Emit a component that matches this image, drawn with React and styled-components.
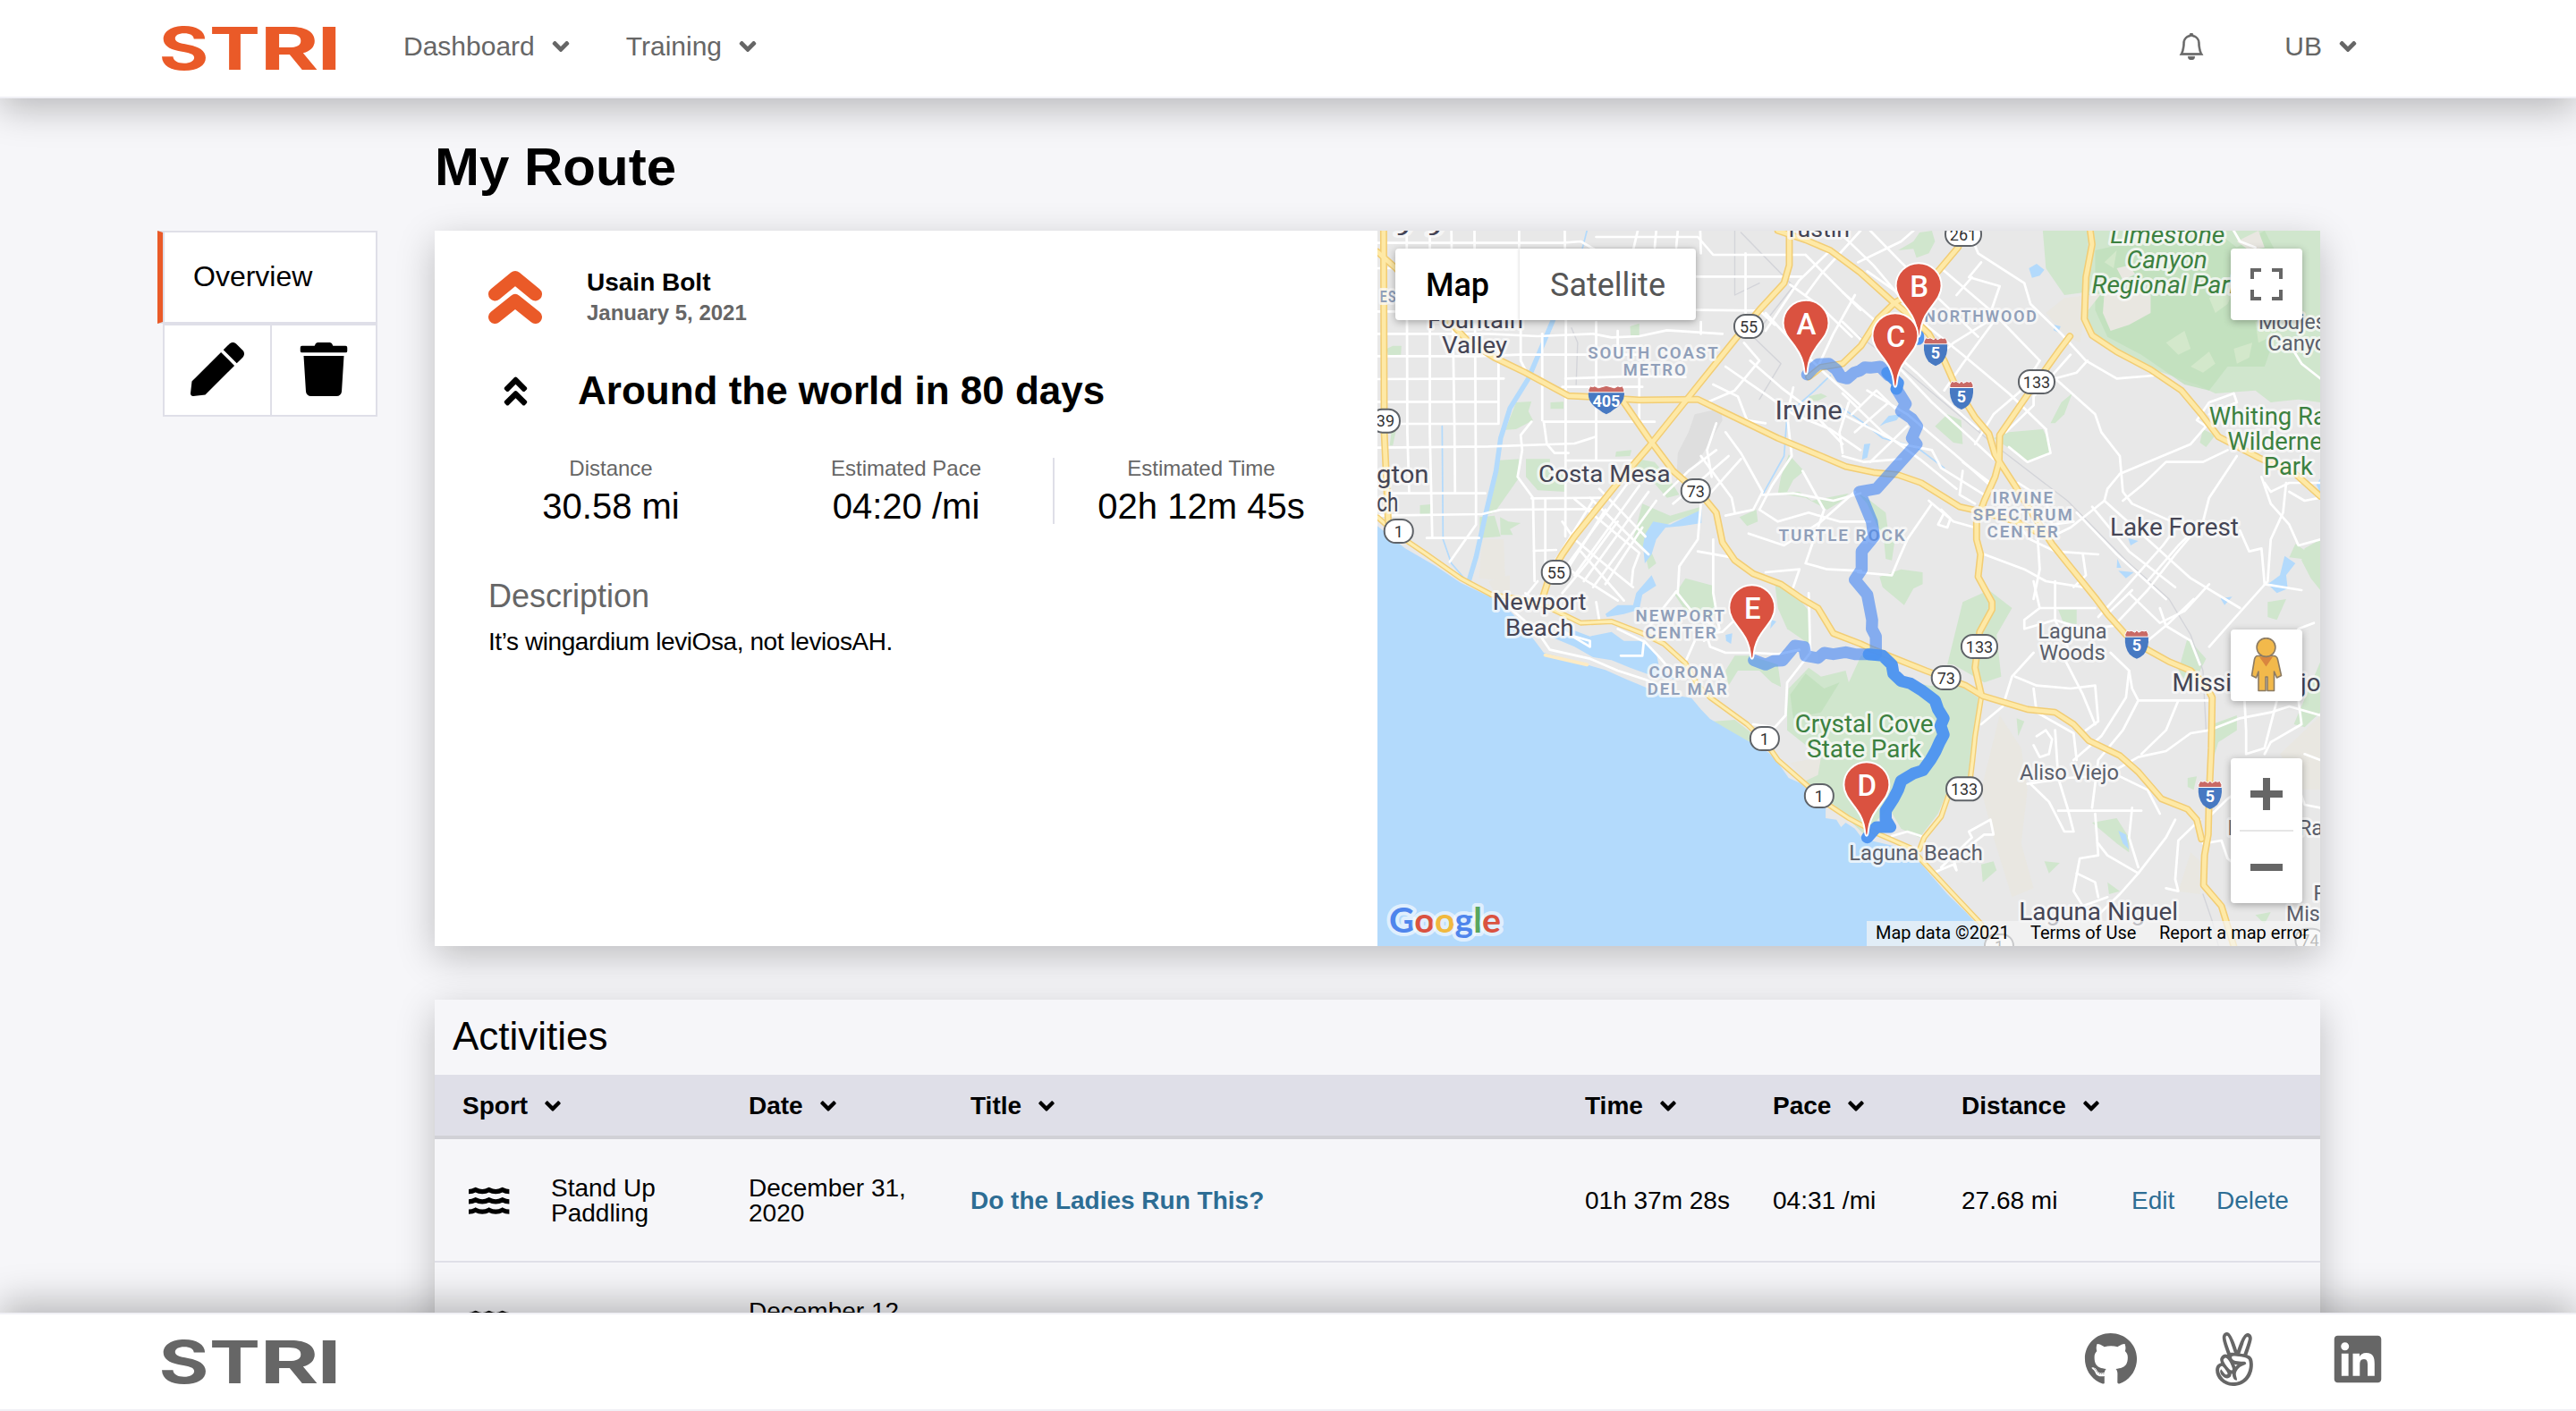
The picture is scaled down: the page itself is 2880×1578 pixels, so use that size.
import React from "react";
import styled, { createGlobalStyle, css } from "styled-components";
import {
  FaAngleDown,
  FaAngleDoubleUp,
  FaAngellist,
  FaGithub,
  FaLinkedin,
  FaPen,
  FaTrash,
} from "react-icons/fa";
import { BsBell } from "react-icons/bs";

const color = {
  orange: "#ea5a28",
  gray: "#666666",
  page: "#f6f6f9",
  line: "#dfdfe8",
  soft: "#f0f0f5",
  link: "#2d6d94",
};

const GlobalStyle = createGlobalStyle`
  *, *::before, *::after { box-sizing: border-box; }
  html, body { height: 100%; overflow: hidden; }
  body {
    margin: 0;
    background: ${color.page};
    color: #000;
    font-family: "Liberation Sans", Arial, Helvetica, sans-serif;
    font-size: 28px;
    line-height: 1;
  }
  ul, h1, h2, h3, p { margin: 0; padding: 0; list-style: none; font-weight: 400; }
  svg { display: block; flex: none; }
`;

/* ---------- page frame ---------- */

const Page = styled.div`
  height: 1578px;
  display: flex;
  flex-direction: column;
`;

const bar = css`
  flex: none;
  display: flex;
  align-items: center;
  height: 110px;
  background: #fff;
  z-index: 2;
`;

const Header = styled.header`
  ${bar}
  padding: 0 240px 5px 178px;
  border-bottom: 2px solid ${color.soft};
  box-shadow: 0 12px 40px rgba(0, 0, 0, 0.25);
`;

const Footer = styled.footer`
  ${bar}
  justify-content: space-between;
  padding: 0 214px 4px 178px;
  border: solid ${color.soft};
  border-width: 2px 0;
  box-shadow: 0 -12px 40px rgba(0, 0, 0, 0.25);
`;

const Nav = styled.nav`
  flex: 1;
  display: flex;
  align-items: center;
  gap: 58px;
  margin-left: 73px;
`;

const NavItem = styled.a`
  display: flex;
  align-items: center;
  gap: 14px;
  color: ${color.gray};
  font-size: 30px;
`;

const Account = styled.div`
  display: flex;
  align-items: center;
  gap: 89px;
  color: ${color.gray};
`;

const Bell = styled(BsBell)`
  stroke: currentColor;
  stroke-width: 0.35px;
`;

const Social = styled.div`
  display: flex;
  gap: 78px;
  padding-bottom: 2px;
  color: ${color.gray};
`;

const Main = styled.main`
  flex: 1;
  min-height: 0;
  display: grid;
  grid-template-columns: 246px 2108px;
  column-gap: 64px;
  padding: 0 0 0 176px;
  align-content: start;
`;

const PageTitle = styled.h1`
  grid-column: 2;
  height: 148px;
  padding: 47px 0 0 0;
  font-size: 60px;
  font-weight: 700;
`;

/* ---------- side menu ---------- */

const SideMenu = styled.ul`
  display: flex;
  flex-direction: column;
`;

const SideTab = styled.li`
  height: 104px;
  padding: 0 0 2px 34px;
  display: flex;
  align-items: center;
  background: #fff;
  border: solid ${color.line};
  border-width: 2px 2px 2px 0;
  border-left: 6px solid ${color.orange};
  box-shadow: inset 2px 0 0 ${color.line};
  font-size: 32px;
`;

const SideActions = styled.li`
  margin-left: 6px;
  height: 104px;
  display: grid;
  grid-template-columns: 120px 1fr;
  border: 2px solid ${color.line};
  background: #fff;
`;

const SideAction = styled.button`
  display: flex;
  align-items: center;
  justify-content: center;
  padding: 0 0 2px;
  border: 0;
  border-right: ${(p) => (p.$divided ? `2px solid ${color.line}` : "0")};
  background: none;
  color: #000;
`;

/* ---------- cards ---------- */

const Content = styled.div`
  display: flex;
  flex-direction: column;
  gap: 60px;
`;

const cardShadow = css`
  box-shadow: 0 12px 40px rgba(0, 0, 0, 0.23);
`;

const RouteCard = styled.section`
  ${cardShadow}
  display: grid;
  grid-template-columns: 1fr 1fr;
  height: 800px;
  background: #fff;
`;

const Details = styled.div`
  display: flex;
  flex-direction: column;
  padding: 44px 30px 0 33px;
`;

const Author = styled.div`
  display: flex;
  align-items: flex-start;
  gap: 50px;
  padding-left: 27px;
`;

const AuthorName = styled.div`
  font-weight: 700;
  font-size: 28px;
`;

const AuthorDate = styled.div`
  margin-top: 8px;
  font-weight: 700;
  font-size: 24px;
  color: ${color.gray};
`;

const RouteTitle = styled.h2`
  display: flex;
  align-items: center;
  gap: 49px;
  margin-top: 51px;
  padding-left: 37px;
  font-size: 44px;
  font-weight: 700;
  height: 48px;
`;

const Stats = styled.ul`
  display: grid;
  grid-template-columns: repeat(3, 330px);
  margin-top: 51px;
`;

const Stat = styled.li`
  display: flex;
  flex-direction: column;
  align-items: center;
  gap: 10px;
  border-right: 2px solid ${(p) => (p.$divided ? color.line : "transparent")};
  font-size: 40px;
`;

const StatLabel = styled.span`
  font-size: 24px;
  color: ${color.gray};
`;

const Description = styled.div`
  display: flex;
  flex-direction: column;
  gap: 19px;
  margin-top: 63px;
  padding-left: 27px;

  h3 {
    font-size: 36px;
    color: ${color.gray};
  }

  p {
    font-size: 28px;
    letter-spacing: -0.42px;
  }
`;

/* ---------- activities ---------- */

const Activities = styled.section`
  ${cardShadow}
  height: 520px;
  background: ${color.page};
`;

const ActivitiesTitle = styled.h2`
  height: 84px;
  padding: 19px 20px 0;
  font-size: 44px;
`;

const row = css`
  display: grid;
  grid-template-columns: 320px 248px 687px 210px 211px 190px 95px 1fr;
  align-items: center;
  padding: 2px 0 0 31px;
`;

const TableHead = styled.div`
  ${row}
  height: 72px;
  background: ${color.line};
  border-bottom: 4px solid #d1d1d6;
  font-weight: 700;
`;

const HeadCell = styled.div`
  display: flex;
  align-items: center;
  gap: 14px;
`;

const TableRow = styled.div`
  ${row}
  height: 138px;
  border-bottom: 2px solid ${color.line};
`;

const Cell = styled.div`
  max-width: ${(p) => p.$max || "none"};
`;

const SportCell = styled.div`
  display: grid;
  grid-template-columns: 92px 130px;
  align-items: center;
  padding-left: 7px;
`;

const Link = styled.a`
  color: ${color.link};
  font-weight: ${(p) => (p.$bold ? 700 : 400)};
`;

/* ---------- drawings ---------- */

const LETTERS = [
  { ch: "S", x: -0.5, w: 56 },
  { ch: "T", x: 56, w: 57 },
  { ch: "R", x: 112.5, w: 66 },
  { ch: "I", x: 176.5, w: 27 },
];

const Logo = ({ fill }) => (
  <svg width="200" height="50" viewBox="0 0 200 50" overflow="visible">
    {LETTERS.map((l) => (
      <text
        key={l.ch}
        x={l.x}
        y="50.5"
        fill={fill}
        fontFamily="Inter, sans-serif"
        fontWeight="700"
        fontSize="65.5"
        textLength={l.w}
        lengthAdjust="spacingAndGlyphs"
      >
        {l.ch}
      </text>
    ))}
  </svg>
);

const Avatar = () => (
  <svg width="60" height="60" viewBox="0 0 60 60" fill="none" stroke={color.orange} strokeWidth="15" strokeLinecap="round" strokeLinejoin="round">
    <path d="M7.5 27 30 8.5 52.500 27M7.500 52.500 30 34.500 52.500 52.500" />
  </svg>
);

const Waves = () => (
  <svg width="46" height="32" viewBox="0 0 46 32" fill="none" stroke="#000" strokeWidth="5.2" strokeLinejoin="miter">
    {[0, 11.3, 22.6].map((y) => (
      <path key={y} d={`M0 ${y + 5.6}Q4 ${y + 5.6} 7.7 ${y + 3.6}Q15.2 ${y + 7.6} 22.7 ${y + 3.6}Q30.2 ${y + 7.6} 37.7 ${y + 3.6}Q41.5 ${y + 5.6} 45.4 ${y + 5.6}`} />
    ))}
  </svg>
);

/* ---------- map ---------- */

const MapFrame = styled.div`
  position: relative;
  overflow: hidden;
  background: #e8e8e8;
`;

const panel = css`
  position: absolute;
  background: #fff;
  border-radius: 4px;
  box-shadow: 0 2px 8px rgba(0, 0, 0, 0.3);
`;

const MapTypes = styled.div`
  ${panel}
  left: 20px;
  top: 20px;
  display: grid;
  grid-template-columns: 139px 197px;
  height: 80px;
  font: 36px/82px Roboto, sans-serif;
  text-align: center;
`;

const MapType = styled.div`
  height: 80px;
  color: ${(p) => (p.$active ? "#000" : "#565656")};
  font-weight: ${(p) => (p.$active ? 500 : 400)};
  box-shadow: ${(p) => (p.$active ? "none" : "-1px 0 3px rgba(0, 0, 0, 0.12)")};
`;

const MapButton = styled.div`
  ${panel}
  right: 20px;
  top: ${(p) => p.$top}px;
  width: 80px;
  height: ${(p) => p.$height || 80}px;
  display: flex;
  align-items: center;
  justify-content: center;
`;

const Legal = styled.div`
  position: absolute;
  right: 0;
  bottom: 0;
  display: flex;
  height: 28px;
  background: rgba(245, 245, 245, 0.7);
  font: 20px/26px Roboto, sans-serif;
  color: #000;
  white-space: nowrap;
`;

const LegalItem = styled.span`
  padding: 0 0 0 10px;
  width: ${(p) => p.$width}px;
`;

/* Roads, parks and water share one survey grid, scaled to the frame. */
const GX = 540 / 1568;
const GY = 1 / 3;
const px = (u) => u * GX;
const py = (v) => (v - 24) * GY;

const WATER = [
  "0,1015 90,1090 190,1150 270,1205 340,1240 400,1270 440,1310 500,1385 540,1440 620,1462 740,1498 810,1530 880,1560 960,1582 1020,1592 1050,1630 1080,1662 1150,1705 1210,1740 1270,1775 1300,1808 1335,1860 1400,1890 1455,1955 1455,1995 1490,2000 1505,2025 1520,2010 1550,2030 1568,2055 1610,2072 1725,2100 1755,2135 1800,2190 1850,2250 1910,2310 1950,2355 1985,2424 0,2424",
  "570,1390 600,1350 690,1385 760,1370 800,1400 860,1400 905,1440 915,1490 970,1530 900,1520 820,1490 760,1465 700,1455 640,1420",
  "740,1310 780,1280 830,1280 840,1240 890,1180 905,1215 860,1245 850,1295 800,1310 745,1320",
  "895,1000 950,1010 1000,985 1052,960 1052,1005 990,1015 935,1020 905,1060 890,1110 868,1140 862,1080 870,1040",
  "2115,150 2140,135 2165,155 2150,175 2125,182",
  "2197,340 2218,345 2210,365 2195,358",
  "1630,680 1660,645 1700,640 1685,660 1650,670",
  "1580,740 1600,738 1590,785 1573,792",
  "2890,1210 2930,1180 2945,1115 2980,1140 2950,1180 2955,1225 2920,1240",
  "2437,1055 2470,1065 2445,1080",
  "2405,1165 2455,1170 2430,1190",
  "2402,1125 2415,1155 2400,1155",
  "2737,1258 2775,1252 2750,1280",
  "3048,875 3061,855 3061,905",
  "2405,2037 2430,2050 2440,2100 2420,2080",
  "1130,1380 1152,1375 1148,1410 1132,1400",
  "1280,1330 1295,1335 1275,1360",
];

const PARK = [
  "30,420 50,410 78,410 76,440 35,442",
  "820,345 850,335 850,375 822,375",
  "450,600 500,597 490,630 505,660 450,690 415,692",
  "562,600 604,598 604,622 562,622",
  "385,795 460,790 458,855 380,970 350,980",
  "482,790 560,790 560,850 612,840 612,900 520,895 482,850",
  "332,985 380,980 400,1050 332,1055",
  "398,985 425,1000 465,1005 430,1025 440,1045 400,1045",
  "775,765 825,760 820,780 772,782",
  "860,940 950,980 1050,950 1050,965 960,1000 900,1030 880,1080 905,1140 880,1160 865,1090 830,1060",
  "845,790 900,800 950,860 980,910 940,920 890,860 830,815",
  "1335,775 1385,830 1350,860 1330,900 1370,900 1410,930 1530,905 1500,935 1460,960 1390,920 1300,905 1310,850",
  "1175,985 1230,960 1235,1000 1200,1015",
  "1400,580 1440,570 1460,580 1430,595 1410,595",
  "138,945 172,942 170,975 138,975",
  "45,700 65,670 50,745 40,745",
  "1560,905 1600,930 1650,970 1660,1050 1680,1060 1670,1130 1650,1125 1645,1070 1625,1020 1590,940",
  "1690,90 1740,60 1760,30 1800,24 1810,60 1790,100 1750,115 1740,85",
  "2160,24 2310,24 2300,230 2230,240 2170,150",
  "2310,24 2700,24 2860,24 3061,24 3061,600 2990,590 2900,600 2850,560 2720,570 2660,540 2520,490 2400,430 2320,370 2295,310 2305,160",
  "2000,720 2050,700 2160,690 2185,740 2185,770 2110,800 2060,760",
  "1850,640 1895,660 1900,740 1870,735 1810,680",
  "2185,670 2220,600 2255,570 2230,640 2200,670",
  "2680,690 2720,710 2690,750 2670,735",
  "3010,1090 3061,1060 3061,1230 3030,1190 3000,1130",
  "2980,1075 3030,1110 3040,1130 2960,1120",
  "2630,1390 2690,1460 2640,1560 2600,1500",
  "1630,1185 1700,1160 1770,1170 1770,1210 1740,1225 1710,1280 1640,1220",
  "965,1245 1000,1190 1090,1215 1100,1310 1060,1330 1000,1300",
  "1290,1205 1340,1220 1400,1300 1400,1410 1330,1360 1300,1290",
  "1130,1500 1160,1450 1210,1450 1300,1480 1310,1555 1280,1540 1240,1500 1170,1500 1140,1550",
  "1090,1670 1160,1665 1215,1710 1220,1745 1170,1720",
  "1335,1560 1400,1490 1440,1520 1520,1500 1530,1540 1570,1450 1640,1450 1700,1530 1790,1550 1890,1550 1950,1590 1940,1750 1920,1860 1860,1880 1820,1980 1760,2060 1700,2030 1660,1960 1580,2050 1480,1950 1390,1870 1440,1790 1330,1700 1330,1640",
  "1900,1270 1985,1230 2060,1290 2010,1380 2025,1520 1970,1540 1870,1480 1850,1480",
  "2210,1295 2270,1295 2270,1345 2225,1335",
  "2630,1860 2660,1855 2650,1900 2630,1890",
  "2710,1680 2790,1650 2790,1700 2730,1740 2715,1790",
  "2890,1270 2950,1260 2920,1330 2890,1320",
  "2975,1680 3061,1470 3061,1640 3010,1690",
  "2320,2010 2400,1995 2440,2060 2440,2110 2400,2080",
  "2370,2210 2410,2240 2375,2250",
  "1960,2150 2000,2140 2010,2170 1965,2210",
  "2075,1660 2100,1670 2080,1720",
  "2165,2140 2215,2145 2180,2180",
  "2850,2320 2900,2310 2880,2350",
];

const FOREST = [
  "2330,90 2460,60 2720,24 2790,80 2880,24 2990,240 2930,330 2880,480 2760,480 2700,560 2620,540 2480,440 2370,380 2330,290",
  "1340,1580 1390,1510 1450,1560 1500,1540 1440,1640 1350,1660",
];

const GLADE = [
  "2560,400 2620,360 2640,420 2600,440", "2700,250 2790,200 2760,270 2720,300", "2850,330 2930,290 2900,380 2860,400", "2640,480 2700,430 2720,470 2680,500",
  "2940,120 3000,90 2990,150 2950,170", "2780,420 2840,400 2830,450 2790,470", "2360,130 2400,90 2390,150", "2800,310 2840,260 2850,310",
];

const HILL = [
  "2230,250 2350,235 2300,300 2280,400 2240,380 2170,300",
  "2360,230 2430,220 2510,240 2510,300 2440,340 2380,360 2355,300",
  "2400,150 2440,140 2460,170 2420,190",
  "2790,60 2860,24 2880,80 2830,90",
  "340,1060 410,1060 415,1200 330,1190",
  "1340,1810 1440,1790 1430,1850 1390,1870",
  "2020,1650 2090,1760 2110,1900 2090,2080 2130,2230 2060,2260 2000,2060 1960,1900",
  "2930,1780 3061,1650 3061,1900 3000,1900",
  "2640,2110 2690,2160 2670,2250 2600,2240",
  "360,1200 430,1180 430,1250 380,1240",
];

const AIRPORT = ["1030,640 1115,620 1120,660 1040,800 970,870 975,770 1010,700"];

const STREETS = [
  "0,65 600,65 660,60 710,90", "0,150 60,150", "0,295 90,295", "0,370 360,370 520,378 700,370 760,382 850,378 940,358 1120,370",
  "0,445 320,445 460,440 850,440", "0,522 410,520", "0,598 390,598", "0,672 390,672", "0,752 360,748 640,738 710,715",
  "40,905 350,905", "0,980 340,975 400,960 720,958", "160,1055 330,1055", "610,520 850,512 1000,515", "540,665 900,665",
  "610,795 830,795", "500,922 740,920", "508,1098 580,1095", "710,45 1040,45 1090,105 1390,105", "720,178 1380,178",
  "1030,290 1240,292 1290,340", "600,548 860,548",
  "95,24 97,700 103,905", "170,24 170,700 178,1055", "240,24 250,680 252,905", "315,24 320,905 320,1010 235,1135",
  "393,420 393,672", "460,24 460,90", "465,340 465,460 480,490", "535,370 535,660", "608,24 612,300 610,1050", "710,330 710,790",
  "845,24 830,90", "905,24 900,80", "975,24 970,80", "1048,24 1050,100", "1050,330 1050,370", "1195,100 1195,300",
  "780,360 780,440", "850,500 850,660", "1530,600 1500,700 1510,770",
  "500,665 465,710 470,760 455,850 505,920 510,1200", "540,665 550,740 575,770 620,770", "545,925 545,1190",
  "600,1000 640,1060 710,1120 830,1220", "640,925 850,1105 830,1160 825,1210", "690,920 880,1110", "720,890 870,1050",
  "620,1160 780,1265", "660,1100 800,1265", "820,860 620,1140", "850,880 640,1180", "880,900 670,1200", "905,930 700,1220", "860,1020 740,1210",
  "780,1000 680,1140 600,1240", "700,930 560,1160", "740,960 610,1170",
  "1100,760 1010,830 930,910", "1140,780 1040,870 960,940", "1180,790 1050,940 1040,1060 980,1150 975,1240",
  "1130,700 1180,770 1250,900 1220,960 1130,980", "1050,780 1150,920 1160,970", "1100,670 1070,760 1085,850",
  "1260,300 1350,400 1450,500 1568,610", "1210,460 1310,550 1400,620 1510,740", "1130,480 1270,580 1350,640 1470,690 1568,760",
  "1390,105 1568,290", "1340,205 1440,280 1540,380", "1470,90 1370,190 1260,360", "1568,24 1440,170 1390,240", "1550,240 1480,370 1430,480",
  "1190,400 1240,460 1160,560 1070,600", "1090,540 1170,580 1200,660 1260,670", "1350,550 1330,640 1345,780 1280,880 1240,960",
  "1250,910 1350,905 1480,930 1568,905", "1240,960 1300,1000 1400,970 1500,1000 1600,1000", "1205,1040 1320,1080 1440,1000 1550,900",
  "1380,830 1450,960 1390,1140 1460,1160 1570,1165", "1040,1100 1150,1120", "1260,1170 1370,1160 1350,1220", "1090,1060 1090,1240 1110,1360 1060,1400",
  "1400,1240 1405,1440 1330,1540 1325,1650 1290,1690 1220,1680", "1060,1350 1080,1420 1130,1440 1220,1440 1300,1445 1370,1430",
  "970,1235 920,1300 870,1370", "970,1235 1020,1300 1090,1350", "1030,1400 1000,1470", "1180,1310 1120,1370 1030,1380",
  "430,1290 520,1370 560,1430 690,1460 780,1500 870,1530 960,1570", "560,1340 690,1420 690,1400 590,1370", "790,1450 860,1450 865,1400 920,1460 960,1510",
  "480,1240 550,1290", "520,1200 450,1290", "710,1270 720,1330", "780,1360 860,1400",
  "1600,24 1700,130 1830,260 1950,380", "1510,40 1610,140 1700,250", "1560,130 1640,90 1700,60 1740,24", "1590,160 1700,240 1780,340 1900,440 2050,570 2170,690",
  "1830,150 2000,300 2150,460", "1920,24 1950,100 2100,200 2120,270 2220,370 2300,460 2400,520 2520,510",
  "1960,130 1920,180 2020,210 1980,330 1870,400 1800,470", "1930,180 1880,240", "2000,330 1900,470 1840,560",
  "1640,400 1750,500 1830,580 1950,690", "1690,480 1800,600 2000,790", "1590,560 1720,640 1870,770 1990,880", "1510,570 1640,700 1760,790 1880,890",
  "1510,230 1620,330 1640,360", "1510,330 1570,390", "1540,640 1620,560 1680,620", "1550,700 1660,600", "1600,800 1720,680",
  "1510,640 1700,740 1800,760 1830,820 1970,910", "1510,780 1580,800 1700,790",
  "2150,460 2090,560 2000,640 1940,740", "2200,520 2330,640 2350,700 2410,780 2420,900 2450,940 2600,1010", "2305,460 2270,500 2200,520",
  "2250,440 2130,580 2130,610 2040,700", "2170,690 2185,770 2110,800 2050,750",
  "2410,840 2640,740 2690,680 2660,660 2700,600 2780,570 2790,600 2700,640", "2790,780 2700,920 2680,1000 2600,1080 2500,1200", "2420,930 2480,880 2560,800 2680,800 2760,760",
  "2410,840 2370,890 2360,930 2250,1020 2190,1050", "2360,930 2500,1060 2640,1190 2800,1290", "2270,970 2400,1110 2560,1260", "2320,950 2440,1100 2590,1220",
  "2880,870 2900,900 2960,870 3061,870", "2870,850 2900,940 2960,1010 2990,1080 3061,1060", "2950,870 2940,970 2900,1060 2890,1200 2760,1350 2700,1420",
  "2600,1010 2550,1080 2430,1220 2340,1320", "2680,1000 2590,1110 2500,1230 2400,1340", "2800,1030 2830,1100 2870,1090 2880,1210 3000,1230", "2960,900 3010,930 3061,920",
  "1800,940 1720,1060 1690,1130 1670,1180 1560,1170", "1840,970 1820,1010 1850,1020 1860,990 1830,960", "1790,930 1870,1000 1940,1020", "2080,870 2170,930 2190,1010 2260,1000",
  "1900,830 1890,910 1940,940", "2000,900 1990,870 1900,800", "1970,1110 2100,1160 2170,1200 2290,1220", "2070,1000 2120,1060 2200,1100 2340,1110", "2140,1000 2150,1160 2130,1260", "2290,1110 2300,1180 2260,1220",
  "2130,1200 2150,1290 2100,1330 2100,1360 2200,1330 2290,1360 2390,1350", "2150,1290 2330,1290", "2200,1200 2200,1330 2240,1420",
  "2130,1440 2060,1520 2030,1620 1960,1680", "2070,1520 2140,1550 2250,1560 2330,1550 2340,1670 2300,1700", "2230,1460 2290,1580 2330,1680", "2380,1440 2440,1500 2450,1560 2470,1600 2700,1600",
  "2440,1500 2430,1590 2350,1720 2260,1800", "2130,1560 2140,1640 2260,1710 2270,1800", "2140,1720 2170,1700 2190,1730 2180,1780 2150,1790 2130,1750",
  "2470,1600 2420,1700 2340,1800 2320,1960", "2200,1700 2210,1860 2240,1960 2260,2040 2230,2040 2180,1940 2120,1880", "2110,1880 2240,1860 2400,1850 2500,1900 2540,1980", "2210,1970 2480,1970",
  "2700,1700 2640,1710 2560,1770 2470,1790 2350,1860", "2600,1600 2560,1700 2480,1780", "2810,1440 2810,1500 2820,1700 2820,1780 2880,1760 2920,1600", "2700,1700 2800,1660 2900,1640 2960,1620 3061,1650",
  "2670,2000 2600,2070 2590,2200 2600,2240 2560,2230", "2330,1980 2340,2120 2280,2130 2260,2240 2290,2290 2370,2260", "2340,2080 2370,2120 2470,2180 2560,2060 2590,2000", "2470,2180 2410,2250 2330,2330",
  "2450,1960 2440,2060 2470,2160", "2270,2180 2330,2210 2340,2260", "1670,2055 1720,2040 1780,2060", "1800,2180 1870,2150 1880,2170 1870,2130 1970,2050 2000,2050 1990,2000 1920,2040 1930,2060 1830,2160",
  "2680,2080 2740,2070 2760,2130 2840,2200", "2700,1990 2760,1930 2800,1900", "3010,1780 3061,1800", "2990,1890 3010,1950 3061,1960", "2990,1600 3000,1680 2900,1740 2880,1780",
  "2540,1290 2560,1350 2640,1400 2670,1480", "2440,1240 2540,1340 2620,1300 2700,1210", "2370,1310 2450,1230", "2500,1400 2570,1340 2650,1260",
  "2780,24 2800,60 2850,80", "2970,420 3000,470 3061,520", "3040,1340 2990,1360 2960,1420",
];

const RAILS = ["1160,24 1160,240 1240,200", "1540,360 1700,480 2000,740 2240,930 2430,1130 2570,1260 2640,1380 2680,1500 2690,1700", "2680,2250 2710,2340 2730,2424", "630,350 650,400 645,540", "1180,30 1350,210 1220,380 1310,470 1240,590"];
const STREAMS = ["680,24 665,85", "1470,510 1420,560 1330,640 1320,780 1250,910", "1510,620 1580,670 1640,720 1750,750 1840,820", "210,680 213,1060 240,1140 290,1200"];

const HIGHWAYS = [
  "20,24 22,700 28,830 35,1000",
  "0,95 60,150 225,320 290,390 380,450 480,500 620,578 700,582 850,592 1040,590 1120,630 1300,720 1440,780 1520,815 1610,835 1690,843 1765,870 1890,950 1945,963 2075,1000 2170,1050",
  "1300,24 1390,55 1470,90 1568,165 1670,260 1730,310 1790,370 1840,460 1870,530 1910,600 1940,650 1985,705 2005,775 2020,800 2070,880 2130,980 2190,1075 2240,1140 2330,1255 2370,1310 2430,1380 2500,1430 2570,1470 2640,1500 2690,1550 2710,1590 2707,1760 2700,1920 2697,2050 2685,2120 2682,2220 2740,2290 2780,2424",
  "1885,80 1820,160 1760,220 1680,265 1625,320 1570,410 1510,470 1440,482 1400,515",
  "2248,378 2210,430 2120,560 2020,710 2018,800 2005,850 1970,930 1945,1000 1945,1060 1958,1110 1950,1185 1995,1270 1995,1295 1955,1370 1940,1490 1960,1580",
  "2314,24 2320,70 2300,180 2295,320 2320,375 2400,430 2510,490 2610,560 2675,640 2730,715 2860,785 2980,840 3061,915",
  "1337,24 1337,140 1320,200 1240,290 1160,390 1020,570 880,750 780,870 640,1050 600,1110 560,1180 535,1260",
  "800,600 880,720 960,830 1060,920 1100,970 1120,1070 1160,1130 1220,1175 1310,1210 1380,1260 1430,1290 1480,1375 1568,1410 1610,1430 1780,1500 1910,1550 1965,1585 2110,1630 2200,1640 2260,1680 2310,1735 2410,1785 2470,1840 2545,1930 2630,1965 2660,2000 2675,2065",
];
const HIGHWAYS_THIN = [
  "0,985 60,1040 160,1110 270,1190 370,1245",
  "370,1245 470,1260 560,1290 660,1340 760,1335 860,1375 930,1410 1000,1475 1040,1550 1080,1590 1200,1680 1260,1740 1300,1800 1400,1890 1450,1940 1530,1995 1620,2045 1730,2095 1770,2140 1860,2240 1960,2350 1990,2424",
  "1960,1590 1940,1720 1932,1800 1925,1860 1860,1900 1830,1990 1775,2060 1760,2100",
];

const ROUTE = [
  "1395,507 1412,488 1430,472 1465,470 1490,490 1505,515 1525,520 1548,500 1566,494 1582,482 1600,484 1632,480 1660,510",
  "1685,555 1715,605 1700,630 1735,655 1752,680 1735,720 1750,740 1620,890 1565,900 1605,1000 1612,1050 1572,1100 1572,1160 1550,1195 1590,1245 1606,1330 1605,1360 1618,1385 1618,1440",
  "1222,1465 1260,1480 1285,1468 1315,1466 1340,1435 1355,1416 1385,1420 1390,1450 1430,1458 1450,1440 1480,1445 1520,1438 1550,1445 1618,1445",
];
const ROUTE_DOUBLE = [
  "1655,500 1690,535 1685,555", "1755,376 1755,388",
  "1595,1445 1640,1450 1670,1480 1675,1510 1700,1535 1730,1543 1765,1565 1810,1600 1820,1630 1838,1660 1828,1685 1838,1715 1825,1740 1812,1770 1795,1800 1770,1835 1740,1845 1700,1870 1690,1900 1675,1930 1650,1970 1650,2000 1665,2025 1620,2025 1590,2060",
];

const CITY = "#454555";
const TOWN = "#5b5f6b";
const PARKTEXT = "#3c8140";
const AREA = "#909fb9";

/* [text, centre u, baseline v, width u, size px, colour, style] */
const LABELS = [
  ["y  y", 145, 24, 170, 26, CITY],
  ["Tustin", 1427, 46, 212, 26, CITY],
  ["Fountain", 318, 352, 310, 26, CITY],
  ["Valley", 315, 436, 212, 26, CITY],
  ["Costa Mesa", 737, 868, 428, 26, CITY],
  ["Irvine", 1400, 656, 218, 30, CITY],
  ["gton", 82, 870, 170, 28, CITY],
  ["ch", 33, 965, 70, 29, CITY],
  ["Newport", 526, 1297, 304, 26, CITY],
  ["Beach", 526, 1382, 222, 26, CITY],
  ["Lake Forest", 2587, 1046, 418, 27, CITY],
  ["Mission Viejo", 2821, 1570, 482, 28, CITY],
  ["Laguna Niguel", 2341, 2338, 516, 28, CITY],
  ["Laguna", 2256, 1393, 224, 24, TOWN],
  ["Woods", 2256, 1464, 214, 24, TOWN],
  ["Aliso Viejo", 2246, 1866, 322, 24, TOWN],
  ["Laguna Beach", 1748, 2136, 434, 24, TOWN],
  ["Modjeska", 3005, 354, 290, 24, TOWN],
  ["Canyon", 3005, 426, 230, 24, TOWN],
  ["Ladera Ranch", 2972, 2052, 424, 24, TOWN],
  ["R", 3060, 2270, 44, 24, TOWN],
  ["Mission", 3068, 2340, 236, 24, TOWN],
  ["ES", 36, 264, 56, 19, AREA, "area"],
  ["SOUTH COAST", 897, 453, 428, 19, AREA, "area"],
  ["METRO", 902, 510, 208, 19, AREA, "area"],
  ["NORTHWOOD", 1960, 329, 370, 19, AREA, "area"],
  ["IRVINE", 2097, 938, 202, 19, AREA, "area"],
  ["SPECTRUM", 2097, 996, 328, 19, AREA, "area"],
  ["CENTER", 2097, 1052, 236, 19, AREA, "area"],
  ["TURTLE ROCK", 1510, 1064, 416, 19, AREA, "area"],
  ["NEWPORT", 985, 1334, 294, 19, AREA, "area"],
  ["CENTER", 987, 1392, 236, 19, AREA, "area"],
  ["CORONA", 1007, 1524, 252, 19, AREA, "area"],
  ["DEL MAR", 1008, 1580, 264, 19, AREA, "area"],
  ["Limestone", 2565, 66, 372, 27, PARKTEXT, "italic"],
  ["Canyon", 2563, 150, 262, 27, PARKTEXT, "italic"],
  ["Regional Park", 2563, 234, 488, 27, PARKTEXT, "italic"],
  ["Whiting Ranch", 2955, 674, 510, 27, PARKTEXT],
  ["Wilderness", 2955, 758, 390, 27, PARKTEXT],
  ["Park", 2957, 842, 160, 27, PARKTEXT],
  ["Crystal Cove", 1580, 1706, 450, 27, PARKTEXT],
  ["State Park", 1580, 1790, 372, 27, PARKTEXT],
];

const MapLabel = ({ text, u, v, w, size, fill, kind }) => (
  <text
    x={px(u - w / 2)}
    y={py(v)}
    fill={fill}
    fontSize={size}
    fontWeight={kind === "area" ? 600 : 400}
    fontStyle={kind === "italic" ? "italic" : "normal"}
    letterSpacing={kind === "area" ? 2 : 0}
    textLength={px(w)}
    lengthAdjust="spacingAndGlyphs"
    stroke="rgba(250,250,250,0.75)"
    strokeWidth="6"
    strokeLinejoin="round"
    paintOrder="stroke"
  >
    {text}
  </text>
);

const STATE_SHIELDS = [
  ["55", 1205, 345], ["39", 26, 662], ["73", 1033, 897], ["1", 69, 1032], ["55", 580, 1170], ["261", 1902, 36], ["133", 2140, 531],
  ["133", 1954, 1419], ["73", 1846, 1524], ["133", 1905, 1897], ["1", 1257, 1728], ["1", 1434, 1920], ["1", 2018, 2424], ["74", 3027, 2405],
];
const INTERSTATES = [["405", 743, 592, 40], ["5", 1812, 430, 26], ["5", 1896, 576, 26], ["5", 2465, 1412, 26], ["5", 2703, 1917, 26]];

const StateShield = ({ text, u, v }) => {
  const w = text.length === 3 ? 40 : 32;
  return (
    <g transform={`translate(${px(u)} ${py(v)})`}>
      <rect x={-w / 2} y="-13" width={w} height="26" rx="12.5" fill="#fff" stroke="#5f6368" strokeWidth="2" />
      <text y="6.5" textAnchor="middle" fontSize="18" fill="#333">{text}</text>
    </g>
  );
};

const Interstate = ({ text, u, v, w }) => (
  <g transform={`translate(${px(u)} ${py(v)})`}>
    <path d={`M${-w / 2} -8.5v-3l2 -4q3 1.5 5 0l4 2 ${w / 2 - 11} -2.5 ${w / 2 - 11} 2.5 4 -2q2 1.5 5 0l2 4v3z`} fill="#c96a65" stroke="#fff" strokeWidth="1" />
    <path d={`M${-w / 2} -8h${w}q1 11 -${w / 2 - 8} 19q-3 3 -8 5q-5 -2 -8 -5q-${w / 2 - 7} -8 -${w / 2 - 8} -19z`} fill="#4779c2" />
    <text y="7.5" textAnchor="middle" fontSize="18" fontWeight="700" fill="#fff">{text}</text>
  </g>
);

const PINS = [["A", 1391, 505], ["B", 1757, 380], ["C", 1681, 548], ["D", 1588, 2054], ["E", 1216, 1460]];

const Pin = ({ letter, u, v }) => (
  <g transform={`translate(${px(u)} ${py(v)})`}>
    <path d="M0 0C-1.6 0-1.8-3-2-6C-3-16-6-22-11-29C-16-37-25.500-45-25.500-57A25.500 25.500 0 0 1 25.500-57C25.500-45 16-37 11-29C6-22 3-16 2-6C1.800-3 1.600 0 0 0Z" fill="#da5240" stroke="#fff" strokeWidth="2" />
    <text x="0.500" y="-44.500" textAnchor="middle" fontSize="33" fontWeight="500" fill="#fff">{letter}</text>
  </g>
);

const Lines = ({ list, ...rest }) => (
  <g fill="none" strokeLinecap="round" strokeLinejoin="round" {...rest}>
    {list.map((points) => <polyline key={points} points={points} />)}
  </g>
);

const Areas = ({ list, fill, opacity }) => (
  <g fill={fill} opacity={opacity}>
    {list.map((points) => <polygon key={points} points={points} />)}
  </g>
);

const GOOGLE = [["G", "#4f85ec"], ["o", "#da5240"], ["o", "#f1b93f"], ["g", "#4f85ec"], ["l", "#5aa75f"], ["e", "#da5240"]];

const MapDrawing = () => (
  <svg width="1054" height="800" viewBox="0 0 1054 800" fontFamily="Roboto, sans-serif">
    <g transform={`scale(${GX} ${GY}) translate(0 -24)`}>
      <Areas list={AIRPORT} fill="#dedede" />
      <Areas list={PARK} fill="#d0e6cd" />
      <Areas list={FOREST} fill="#bfe0bb" opacity="0.8" />
      <Areas list={GLADE} fill="#d3e8cb" />
      <Areas list={HILL} fill="#e9e7e1" />
      <Areas list={WATER} fill="#b3dafc" />
      <Lines list={STREAMS} stroke="#b3dafc" strokeWidth="5" />
      <Lines list={["580,300 490,520 430,620 400,720 385,830 350,980 320,1120 295,1205"]} stroke="#b3dafc" strokeWidth="16" />
      <Lines list={RAILS} stroke="#d3d4d9" strokeWidth="4" />
      <Lines list={["545,1448 680,1480"]} stroke="#fdebc4" strokeWidth="12" />
      <Lines list={STREETS} stroke="#fff" strokeWidth="8" />
      <Lines list={HIGHWAYS_THIN} stroke="#f2cd74" strokeWidth="18" />
      <Lines list={HIGHWAYS_THIN} stroke="#feedaf" strokeWidth="10" />
      <Lines list={HIGHWAYS} stroke="#f2cd74" strokeWidth="23" />
      <Lines list={HIGHWAYS} stroke="#fee9a6" strokeWidth="14" />
    </g>
    {STATE_SHIELDS.map(([t, u, v]) => <StateShield key={t + u} text={t} u={u} v={v} />)}
    {LABELS.map(([t, u, v, w, s, f, k]) => <MapLabel key={t + u + v} text={t} u={u} v={v} w={w} size={s} fill={f} kind={k} />)}
    {INTERSTATES.map(([t, u, v, w]) => <Interstate key={t + u} text={t} u={u} v={v} w={w} />)}
    <g transform={`scale(${GX} ${GY}) translate(0 -24)`}>
      <Lines list={ROUTE} stroke="#4285f4" strokeWidth="39" opacity="0.6" />
      <Lines list={ROUTE_DOUBLE} stroke="#4b92f0" strokeWidth="39" opacity="0.95" />
    </g>
    {PINS.map(([l, u, v]) => <Pin key={l} letter={l} u={u} v={v} />)}
    <text x="13" y={py(2378)} fontFamily="Lato, sans-serif" fontWeight="700" fontSize="39" textLength="125" lengthAdjust="spacingAndGlyphs" stroke="rgba(255,255,255,0.6)" strokeWidth="8" strokeLinejoin="round" paintOrder="stroke">
      {GOOGLE.map(([ch, fill], i) => <tspan key={i} fill={fill}>{ch}</tspan>)}
    </text>
  </svg>
);

const Fullscreen = () => (
  <svg width="36" height="36" viewBox="0 0 36 36" fill="none" stroke="#666" strokeWidth="4">
    <path d="M2 12V2h10M24 2h10v10M34 24v10H24M12 34H2V24" />
  </svg>
);

const Pegman = () => (
  <svg width="36" height="62" viewBox="0 0 36 62" stroke="#8c7b63" strokeWidth="1.6" fill="#f2b94b" strokeLinejoin="round">
    <path d="M8 20.500h18q3.500 0 4.500 4l4 18-5 2.500-3-7v21.500h-7.500V44h-2v15.500H9V38l-2.500 7-5-2.500 3-18q1-4 3.500-4z" />
    <path d="M10 21.500h15l-7.500 11z" fill="#d9853f" stroke="none" />
    <circle cx="17.500" cy="11" r="10.400" />
  </svg>
);

const ZoomGlyphs = () => (
  <svg width="60" height="162" viewBox="0 0 60 162">
    <path d="M12 36h36v8H12zM26 22h8v36h-8zM12 118h36v8H12z" fill="#666" />
    <path d="M0 80h60v2H0z" fill="#e6e6e6" />
  </svg>
);

const RouteMap = () => (
  <MapFrame>
    <MapDrawing />
    <MapTypes>
      <MapType $active>Map</MapType>
      <MapType>Satellite</MapType>
    </MapTypes>
    <MapButton $top={20}><Fullscreen /></MapButton>
    <MapButton $top={446}><Pegman /></MapButton>
    <MapButton $top={590} $height={162}><ZoomGlyphs /></MapButton>
    <Legal>
      <LegalItem $width={173}>Map data ©2021</LegalItem>
      <LegalItem $width={144}>Terms of Use</LegalItem>
      <LegalItem $width={190}>Report a map error</LegalItem>
    </Legal>
  </MapFrame>
);

/* ---------- app ---------- */

const HEAD = ["Sport", "Date", "Title", "Time", "Pace", "Distance"];

export default function App() {
  return (
    <Page>
      <GlobalStyle />
      <Header>
        <Logo fill={color.orange} />
        <Nav>
          <NavItem>Dashboard<FaAngleDown /></NavItem>
          <NavItem>Training<FaAngleDown /></NavItem>
        </Nav>
        <Account>
          <Bell size={30} />
          <NavItem>UB<FaAngleDown /></NavItem>
        </Account>
      </Header>

      <Main>
        <PageTitle>My Route</PageTitle>
        <SideMenu>
          <SideTab>Overview</SideTab>
          <SideActions>
            <SideAction $divided><FaPen size={60} /></SideAction>
            <SideAction><FaTrash size={60} /></SideAction>
          </SideActions>
        </SideMenu>

        <Content>
          <RouteCard>
            <Details>
              <Author>
                <Avatar />
                <div>
                  <AuthorName>Usain Bolt</AuthorName>
                  <AuthorDate>January 5, 2021</AuthorDate>
                </div>
              </Author>
              <RouteTitle><FaAngleDoubleUp size={41} />Around the world in 80 days</RouteTitle>
              <Stats>
                <Stat><StatLabel>Distance</StatLabel>30.58 mi</Stat>
                <Stat $divided><StatLabel>Estimated Pace</StatLabel>04:20 /mi</Stat>
                <Stat><StatLabel>Estimated Time</StatLabel>02h 12m 45s</Stat>
              </Stats>
              <Description>
                <h3>Description</h3>
                <p>It’s wingardium leviOsa, not leviosAH.</p>
              </Description>
            </Details>
            <RouteMap />
          </RouteCard>

          <Activities>
            <ActivitiesTitle>Activities</ActivitiesTitle>
            <TableHead>
              {HEAD.map((h) => <HeadCell key={h}>{h}<FaAngleDown /></HeadCell>)}
            </TableHead>
            <TableRow>
              <SportCell><Waves />Stand Up Paddling</SportCell>
              <Cell $max="190px">December 31, 2020</Cell>
              <Cell><Link $bold>Do the Ladies Run This?</Link></Cell>
              <Cell>01h 37m 28s</Cell>
              <Cell>04:31 /mi</Cell>
              <Cell>27.68 mi</Cell>
              <Cell><Link>Edit</Link></Cell>
              <Cell><Link>Delete</Link></Cell>
            </TableRow>
            <TableRow>
              <SportCell><Waves /></SportCell>
              <Cell $max="190px">December 12, 2020</Cell>
            </TableRow>
          </Activities>
        </Content>
      </Main>

      <Footer>
        <Logo fill={color.gray} />
        <Social>
          <FaGithub size={60} />
          <FaAngellist size={60} />
          <FaLinkedin size={60} />
        </Social>
      </Footer>
    </Page>
  );
}
